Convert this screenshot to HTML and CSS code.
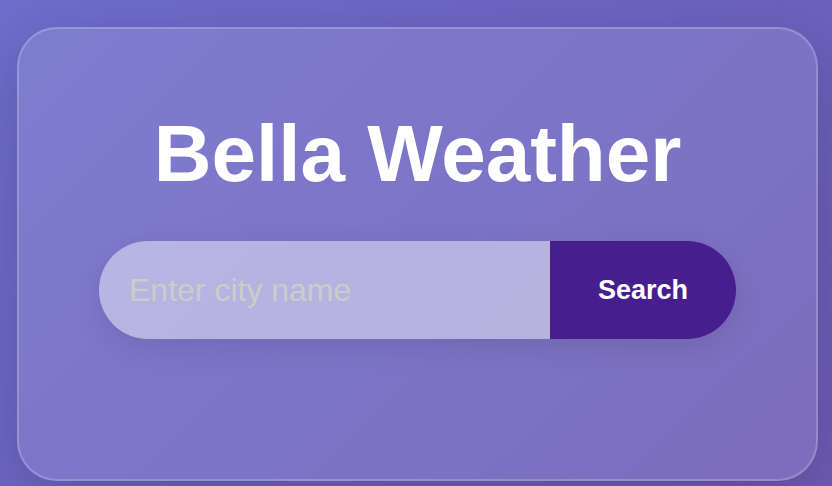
FILE: index.html
```html
<!DOCTYPE html>
<html lang="en">
<head>
<meta charset="utf-8">
<title>Bella Weather</title>
<link rel="stylesheet" href="styles.css">
</head>
<body>
<main class="card">
  <h1 class="title">Bella Weather</h1>
  <form class="search">
    <input class="search-input" type="text" placeholder="Enter city name" aria-label="City name">
    <button class="search-button" type="submit">Search</button>
  </form>
</main>
</body>
</html>
```

FILE: styles.css
```css
* {
  box-sizing: border-box;
}

html {
  min-height: 100%;
  background: linear-gradient(135deg, #6e6ecc, #6c64c1 50%, #6d5bb3);
}

body {
  margin: 0;
  padding: 27px 14px 5px 17px;
  font-family: "Liberation Sans", Arial, sans-serif;
  overflow: hidden;
}

.card {
  padding: 80px 80px 140px;
  border: 2px solid rgba(255, 255, 255, 0.2);
  border-radius: 40px;
  background: rgba(255, 255, 255, 0.11);
  box-shadow: 0 16px 64px rgba(0, 0, 0, 0.18);
}

.title {
  margin: 0 0 42px;
  color: #fff;
  font-size: 80px;
  line-height: 90px;
  text-align: center;
  white-space: nowrap;
}

.search {
  display: flex;
  height: 98px;
  border-radius: 50px;
  box-shadow: 0 8px 30px rgba(0, 0, 0, 0.1);
  overflow: hidden;
}

.search-input {
  flex: 1;
  min-width: 0;
  padding: 0 30px;
  border: 0;
  outline: 0;
  background: rgba(255, 255, 255, 0.45);
  color: #333;
  font: 32px "Liberation Sans", Arial, sans-serif;
}

.search-input::placeholder {
  color: #ccc;
}

.search-button {
  padding: 0 48px;
  border: 0;
  background: #461e8e;
  color: #fff;
  font: bold 27px "Liberation Sans", Arial, sans-serif;
}
```
